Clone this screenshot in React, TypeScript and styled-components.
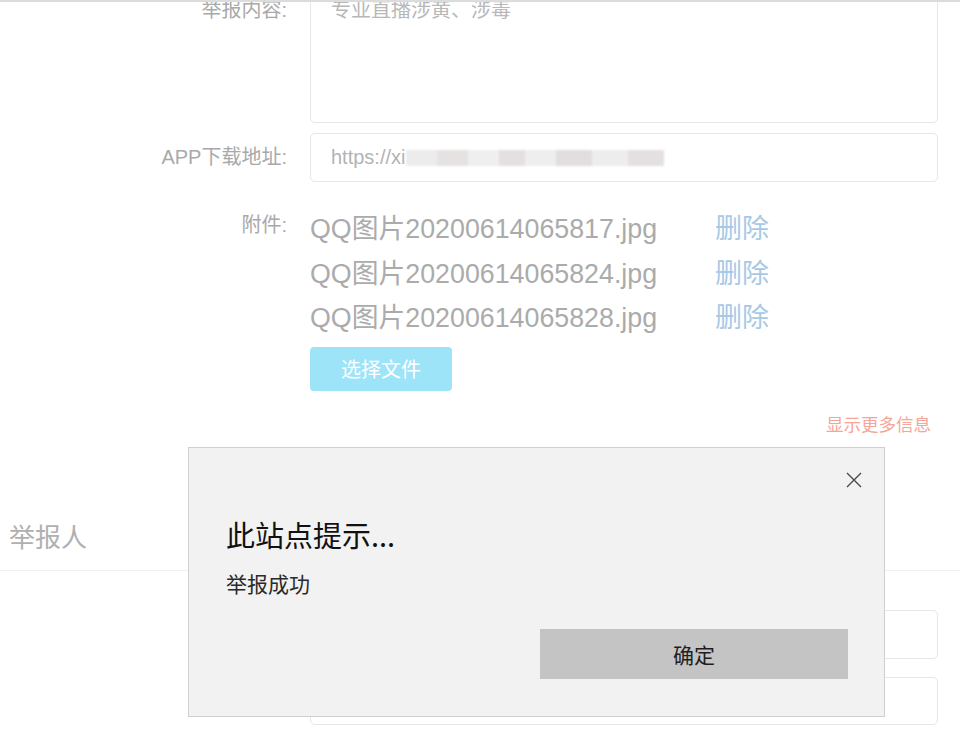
import styled, { createGlobalStyle } from 'styled-components'

const GlobalStyle = createGlobalStyle`
  html, body {
    margin: 0;
    padding: 0;
    background: #ffffff;
    font-family: "Liberation Sans", "Noto Sans CJK SC", sans-serif;
  }
`

const Page = styled.div`
  width: 960px;
  height: 745px;
  border-top: 2px solid #dcdcdc;
  box-sizing: border-box;
  overflow: hidden;
`

const Form = styled.div`
  margin-top: -14px;
`

const Row = styled.div<{ $gap?: number }>`
  display: grid;
  grid-template-columns: 287px 628px;
  column-gap: 23px;
  margin-top: ${(p) => p.$gap ?? 0}px;
`

const Label = styled.div<{ $offset?: number }>`
  text-align: right;
  font-size: 20px;
  line-height: 30px;
  color: #a9a9a9;
  padding-top: ${(p) => p.$offset ?? 0}px;
`

const TextArea = styled.div`
  height: 135px;
  box-sizing: border-box;
  border: 1px solid #e6e6e6;
  border-radius: 5px;
  padding: 6px 20px;
  font-size: 20px;
  line-height: 30px;
  color: #b8b8b8;
`

const Input = styled.div<{ $h?: number }>`
  height: ${(p) => p.$h ?? 49}px;
  box-sizing: border-box;
  border: 1px solid #e6e6e6;
  border-radius: 5px;
  padding: 0 20px;
  display: flex;
  align-items: center;
  font-size: 20px;
  color: #b3b3b3;
`

const Redacted = styled.span`
  display: inline-block;
  width: 258px;
  height: 16px;
  margin-left: 1px;
  filter: blur(1px);
  background: linear-gradient(
    90deg,
    #ececec 0 12%,
    #e6e2e2 12% 24%,
    #efefef 24% 36%,
    #e4dfe0 36% 46%,
    #eeeeee 46% 58%,
    #e2dedf 58% 72%,
    #ededed 72% 86%,
    #e4e0e1 86% 100%
  );
`

const Files = styled.div`
  display: flex;
  flex-direction: column;
  align-items: flex-start;
`

const FileRow = styled.div`
  display: grid;
  grid-template-columns: 405px auto;
  font-size: 26.8px;
  line-height: 44.5px;
  color: #ababab;
`

const Delete = styled.span`
  font-size: 27px;
  color: #a8c9e6;
`

const PickButton = styled.div`
  margin-top: 6px;
  width: 142px;
  height: 44px;
  border-radius: 4px;
  background: #9ee4f9;
  color: #ffffff;
  font-size: 20px;
  display: flex;
  align-items: center;
  justify-content: center;
`

const MoreLink = styled.div`
  margin-top: 21px;
  text-align: right;
  padding-right: 29px;
  font-size: 17.5px;
  line-height: 26px;
  color: #f6a597;
`

const SectionTitle = styled.div`
  margin-top: 82px;
  padding: 0 0 14px 9px;
  font-size: 26px;
  line-height: 36px;
  color: #b0b0b0;
  border-bottom: 1px solid #f0f0f0;
`

const Overlay = styled.div`
  position: fixed;
  left: 188px;
  top: 447px;
  width: 697px;
  height: 270px;
  box-sizing: border-box;
  background: #f2f2f2;
  border: 1px solid #cfcfcf;
  display: flex;
  flex-direction: column;
  font-family: "Noto Sans CJK SC", "Liberation Sans", sans-serif;
`

const DialogHead = styled.div`
  display: flex;
  justify-content: flex-end;
  padding: 21px 19px 0 0;
`

const CloseButton = styled.div`
  width: 22px;
  height: 22px;
  display: flex;
  align-items: center;
  justify-content: center;
`

const DialogTitle = styled.div`
  margin-top: 23px;
  padding-left: 37px;
  font-size: 29px;
  line-height: 40px;
  color: #111111;
`

const DialogMessage = styled.div`
  margin-top: 14px;
  padding-left: 37px;
  font-size: 21px;
  line-height: 30px;
  color: #2a2a2a;
`

const DialogFoot = styled.div`
  margin-top: 31px;
  display: flex;
  justify-content: flex-end;
  padding-right: 36px;
`

const OkButton = styled.div`
  width: 308px;
  height: 50px;
  background: #c4c4c4;
  color: #1e1e1e;
  font-size: 21px;
  display: flex;
  align-items: center;
  justify-content: center;
`

const files = ['QQ图片20200614065817.jpg', 'QQ图片20200614065824.jpg', 'QQ图片20200614065828.jpg']

export default function App() {
  return (
    <>
      <GlobalStyle />
      <Page>
        <Form>
          <Row>
            <Label $offset={7}>举报内容:</Label>
            <TextArea>专业直播涉黄、涉毒</TextArea>
          </Row>
          <Row $gap={10}>
            <Label $offset={9}>APP下载地址:</Label>
            <Input>
              https://xi
              <Redacted />
            </Input>
          </Row>
          <Row $gap={25}>
            <Label $offset={3}>附件:</Label>
            <Files>
              {files.map((f) => (
                <FileRow key={f}>
                  <span>{f}</span>
                  <Delete>删除</Delete>
                </FileRow>
              ))}
              <PickButton>选择文件</PickButton>
            </Files>
          </Row>
          <MoreLink>显示更多信息</MoreLink>
          <SectionTitle>举报人</SectionTitle>
          <Row $gap={39}>
            <Label $offset={9}>联系人:</Label>
            <Input />
          </Row>
          <Row $gap={18}>
            <Label $offset={9}>联系电话:</Label>
            <Input $h={48} />
          </Row>
        </Form>
      </Page>
      <Overlay>
        <DialogHead>
          <CloseButton>
            <svg width="16" height="16" viewBox="0 0 16 16">
              <path d="M1 1L15 15M15 1L1 15" stroke="#4a4a4a" strokeWidth="1.4" fill="none" />
            </svg>
          </CloseButton>
        </DialogHead>
        <DialogTitle>此站点提示...</DialogTitle>
        <DialogMessage>举报成功</DialogMessage>
        <DialogFoot>
          <OkButton>确定</OkButton>
        </DialogFoot>
      </Overlay>
    </>
  )
}
